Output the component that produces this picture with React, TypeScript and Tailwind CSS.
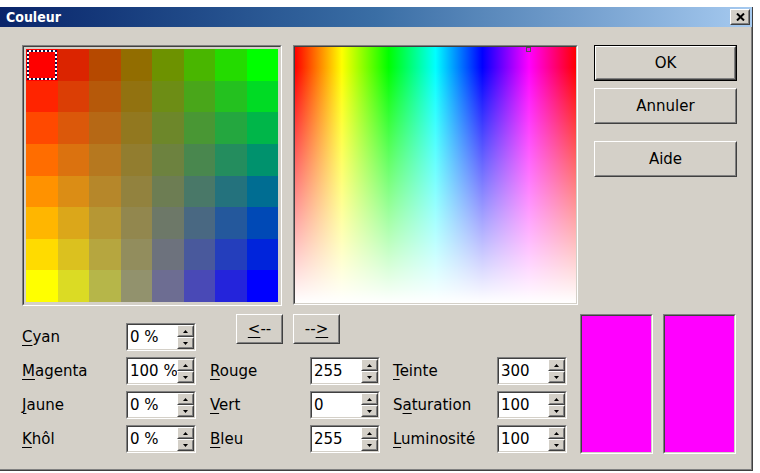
import React from "react";

// 8x8 palette: bilinear blend between four corner colours
const TL = [255, 0, 0];
const TR = [0, 255, 0];
const BL = [255, 255, 0];
const BR = [0, 0, 255];

function mix(a: number[], b: number[], t: number) {
  return a.map((v, i) => Math.round(v + (b[i] - v) * t));
}

const palette: string[] = [];
for (let r = 0; r < 8; r++) {
  for (let c = 0; c < 8; c++) {
    const top = mix(TL, TR, c / 7);
    const bottom = mix(BL, BR, c / 7);
    const [R, G, B] = mix(top, bottom, r / 7);
    palette.push(`rgb(${R},${G},${B})`);
  }
}

function Sunken({ className = "", innerClassName = "", children }: { className?: string; innerClassName?: string; children?: React.ReactNode }) {
  return (
    <div className={`border border-t-[#808080] border-l-[#808080] border-r-white border-b-white ${className}`}>
      <div className={`h-full w-full border border-t-[#404040] border-l-[#404040] border-r-[#d4d0c8] border-b-[#d4d0c8] ${innerClassName}`}>
        {children}
      </div>
    </div>
  );
}

function Raised({ className = "", children }: { className?: string; children?: React.ReactNode }) {
  return (
    <div className={`border border-t-white border-l-white border-r-[#404040] border-b-[#404040] bg-[#d4d0c8] ${className}`}>
      <div className="flex h-full w-full items-center justify-center border border-t-[#d4d0c8] border-l-[#d4d0c8] border-r-[#808080] border-b-[#808080]">
        {children}
      </div>
    </div>
  );
}

function Key({ children }: { children: React.ReactNode }) {
  return <span className="underline decoration-1 underline-offset-[3px]">{children}</span>;
}

function SpinField({ value }: { value: string }) {
  return (
    <Sunken className="h-[28px] w-[70px] shrink-0" innerClassName="flex bg-white">
      <div className="flex min-w-0 flex-1 items-center whitespace-nowrap pl-[2px] text-[15px] leading-none">{value}</div>
      <div className="flex w-[17px] shrink-0 flex-col">
        <Raised className="h-1/2">
          <svg width="5" height="3" viewBox="0 0 5 3"><path d="M2.5 0L5 3H0z" fill="#000" /></svg>
        </Raised>
        <Raised className="h-1/2">
          <svg width="5" height="3" viewBox="0 0 5 3"><path d="M0 0h5L2.5 3z" fill="#000" /></svg>
        </Raised>
      </div>
    </Sunken>
  );
}

function Row({ label, value, labelWidth }: { label: React.ReactNode; value: string; labelWidth: string }) {
  return (
    <div className="flex h-[28px] items-center">
      <div className={`${labelWidth} shrink-0 text-[15px] leading-none`}>{label}</div>
      <SpinField value={value} />
    </div>
  );
}

export default function App() {
  return (
    <div className="h-[473px] w-[760px] overflow-hidden bg-white pt-[7px] font-['DejaVu_Sans','Verdana',sans-serif] text-black">
      <div className="flex h-[464px] w-[753px] flex-col border-r border-b border-[#404040] bg-[#d4d0c8] shadow-[inset_-1px_-1px_0_#808080]">
        {/* title bar */}
        <div className="flex h-[20px] items-center justify-between bg-linear-to-r from-[#0a246a] via-[#3a6ea5] to-[#a6caf0] pl-[6px] pr-[2px]">
          <span className="font-['DejaVu_Sans_Condensed','Liberation_Sans_Narrow','DejaVu_Sans',sans-serif] text-[14px] font-bold leading-none text-white">
            Couleur
          </span>
          <Raised className="h-[16px] w-[20px]">
            <svg width="9" height="8" viewBox="0 0 9 8">
              <path d="M1 0.5L8 7.5M8 0.5L1 7.5" stroke="#000" strokeWidth="2" />
            </svg>
          </Raised>
        </div>

        {/* top: palette, spectrum, buttons */}
        <div className="flex pl-[22px] pt-[18px]">
          <Sunken className="h-[261px] w-[260px] shrink-0" innerClassName="p-[2px]">
            <div className="grid h-full w-full grid-cols-8 grid-rows-8">
              {palette.map((c, i) => (
                <div key={i} className="relative" style={{ backgroundColor: c }}>
                  {i === 0 && (
                    <div className="absolute inset-[1px] border-2 border-white outline-2 outline-dotted outline-offset-[-2px] outline-[#101040]" />
                  )}
                </div>
              ))}
            </div>
          </Sunken>

          <Sunken className="ml-[11px] h-[260px] w-[285px] shrink-0" innerClassName="relative bg-[image:linear-gradient(to_bottom,rgba(255,255,255,0)_8%,#ffffff),linear-gradient(to_right,#ff0000,#ffff00,#00ff00,#00ffff,#0000ff,#ff00ff,#ff0000)]">
            <div className="absolute left-[231px] top-0 h-[5px] w-[5px] border border-[#505050]" />
          </Sunken>

          <div className="ml-[16px] flex w-[143px] flex-col text-[15px]">
            <div className="h-[36px] border border-black">
              <Raised className="h-full w-full">OK</Raised>
            </div>
            <Raised className="mt-[7px] h-[36px]">Annuler</Raised>
            <Raised className="mt-[17px] h-[36px]">Aide</Raised>
          </div>
        </div>

        {/* bottom: fields and preview */}
        <div className="mt-[8px] flex pl-[22px]">
          <div className="flex w-[174px] shrink-0 flex-col gap-[6px] pt-[9px]">
            <Row labelWidth="w-[104px]" label={<><Key>C</Key>yan</>} value="0 %" />
            <Row labelWidth="w-[104px]" label={<><Key>M</Key>agenta</>} value="100 %" />
            <Row labelWidth="w-[104px]" label={<><Key>J</Key>aune</>} value="0 %" />
            <Row labelWidth="w-[104px]" label={<><Key>K</Key>hôl</>} value="0 %" />
          </div>

          <div className="ml-[14px] w-[357px] shrink-0">
            <div className="flex h-[30px] gap-[10px] pl-[26px] text-[15px]">
              <Raised className="h-[30px] w-[47px]"><span><Key>&lt;</Key>--</span></Raised>
              <Raised className="h-[30px] w-[47px]"><span>--<Key>&gt;</Key></span></Raised>
            </div>
            <div className="mt-[13px] flex flex-col gap-[6px]">
              <div className="flex gap-[13px]">
                <Row labelWidth="w-[100px]" label={<><Key>R</Key>ouge</>} value="255" />
                <Row labelWidth="w-[104px]" label={<><Key>T</Key>einte</>} value="300" />
              </div>
              <div className="flex gap-[13px]">
                <Row labelWidth="w-[100px]" label={<><Key>V</Key>ert</>} value="0" />
                <Row labelWidth="w-[104px]" label={<>S<Key>a</Key>turation</>} value="100" />
              </div>
              <div className="flex gap-[13px]">
                <Row labelWidth="w-[100px]" label={<><Key>B</Key>leu</>} value="255" />
                <Row labelWidth="w-[104px]" label={<><Key>L</Key>uminosité</>} value="100" />
              </div>
            </div>
          </div>

          <div className="ml-[13px] flex gap-[10px]">
            <Sunken className="h-[140px] w-[73px]" innerClassName="bg-[#ff00ff]" />
            <Sunken className="h-[140px] w-[73px]" innerClassName="bg-[#ff00ff]" />
          </div>
        </div>
      </div>
    </div>
  );
}
